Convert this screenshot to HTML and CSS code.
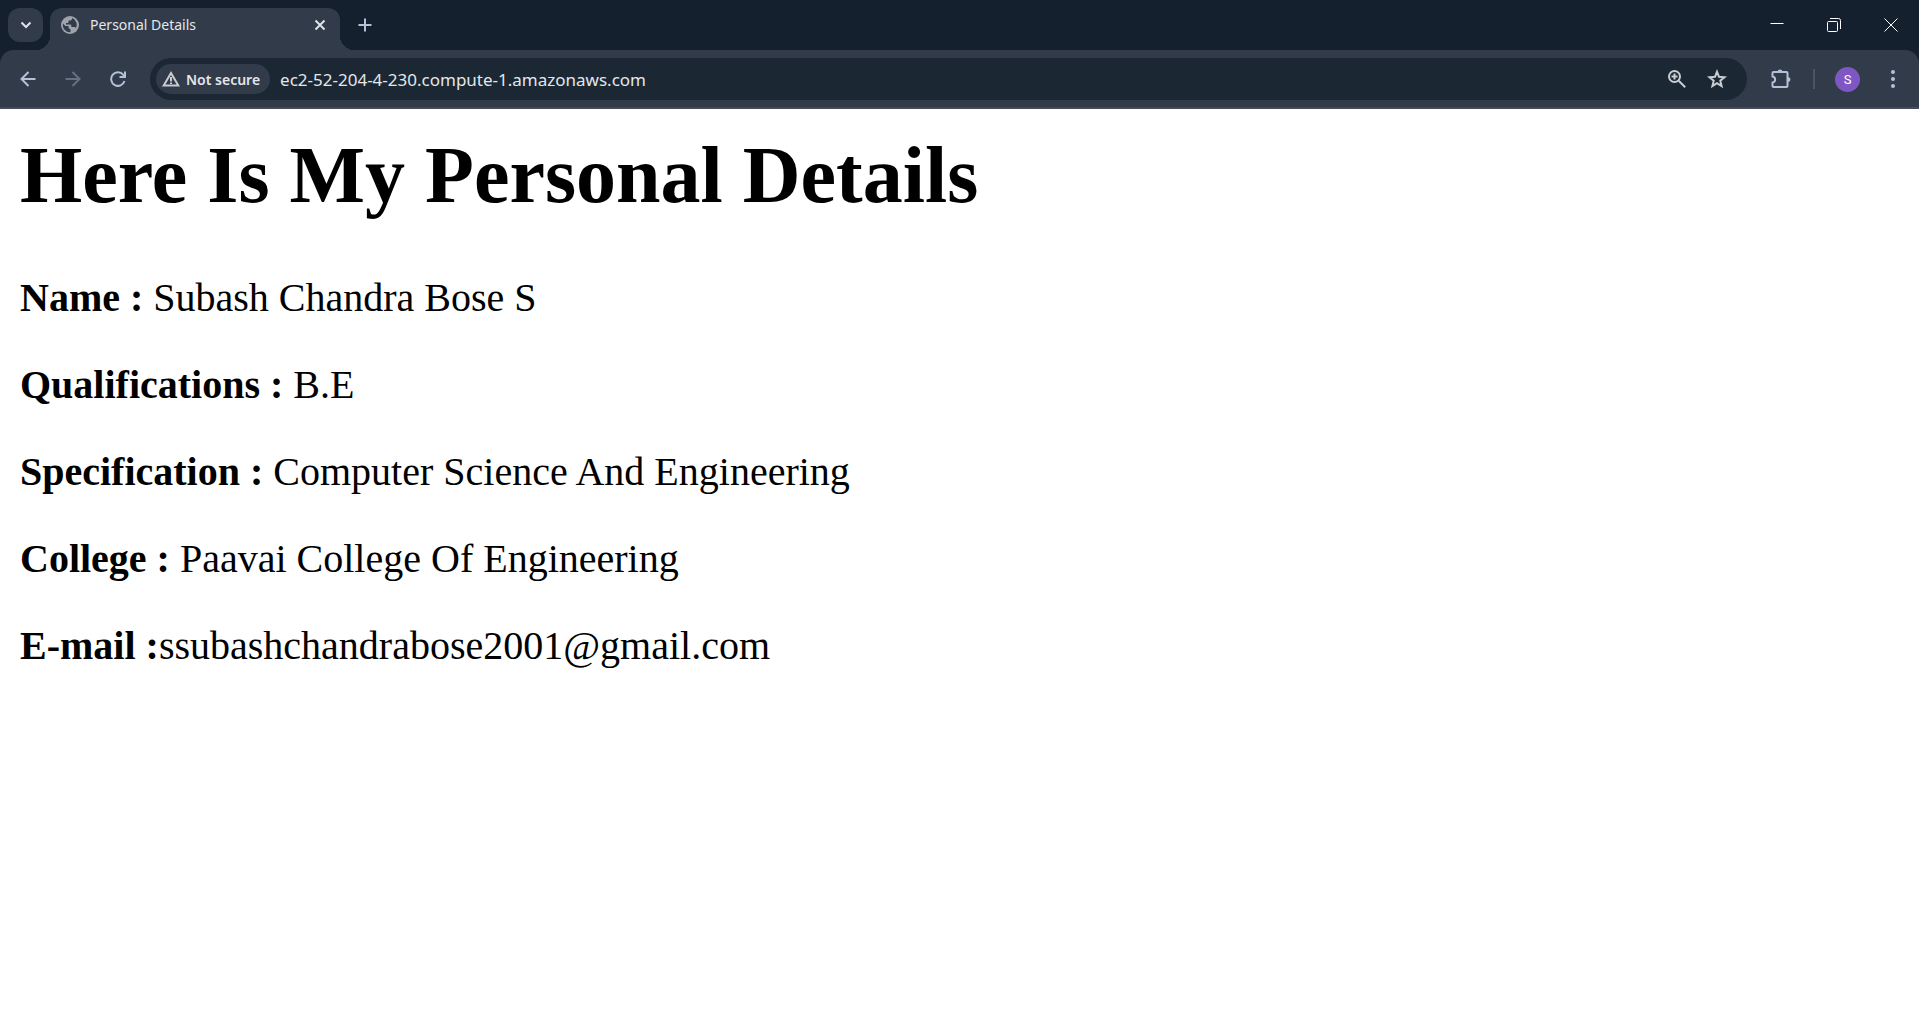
FILE: index.html
```html
<!DOCTYPE html>
<html lang="en">
<head>
<meta charset="utf-8">
<title>Personal Details</title>
<link rel="stylesheet" href="styles.css">
</head>
<body>
<header class="browser">
  <div class="tab-strip">
    <button class="tab-search" aria-label="Search tabs">
      <svg width="12" height="8" viewBox="0 0 12 8"><path d="M1.500 1.500 6 6l4.500-4.500" class="line"/></svg>
    </button>
    <div class="tab">
      <svg class="globe" width="18" height="18" viewBox="0 0 18 18"><circle cx="9" cy="9" r="9" fill="#a0a4aa"/><path d="M2 7.500 4.500 10h3v2l2 1.500v2.700A7.200 7.200 0 0 1 2 7.500ZM11 2.100v.600c0 1-.800 1.800-1.800 1.800H7.500v1.700c0 .500-.400.900-.900.900H5v1.300h4.400c.500 0 .900.400.900.900v1.600h2.900c.800 0 1.500.500 1.700 1.200A7.200 7.200 0 0 0 11 2.100Z" fill="#313b4a"/></svg>
      <span class="tab-title">Personal Details</span>
      <button class="tab-close" aria-label="Close tab">
        <svg width="12" height="12" viewBox="0 0 12 12"><path d="m1.500 1.500 9 9m0-9-9 9" class="line"/></svg>
      </button>
    </div>
    <button class="new-tab" aria-label="New tab">
      <svg width="14" height="14" viewBox="0 0 14 14"><path d="M7 .500v13M.500 7h13" class="line blue"/></svg>
    </button>
    <div class="window-buttons">
      <button aria-label="Minimize"><svg width="14" height="14" viewBox="0 0 14 14"><path d="M.500 5.500h13" class="line thin"/></svg></button>
      <button aria-label="Restore"><svg width="14" height="14" viewBox="0 0 14 14"><rect x=".5" y="3.500" width="10" height="10" rx="1" class="line thin"/><path d="M3 .500h8.500a2 2 0 0 1 2 2V11" class="line thin"/></svg></button>
      <button aria-label="Close"><svg width="14" height="14" viewBox="0 0 14 14"><path d="m.500.500 13 13m0-13-13 13" class="line thin"/></svg></button>
    </div>
  </div>
  <div class="toolbar">
    <button class="nav" aria-label="Back"><svg width="16" height="16" viewBox="0 0 16 16"><path d="M15.500 8H2m6.500-7L1.500 8l7 7" class="line blue"/></svg></button>
    <button class="nav dim" aria-label="Forward"><svg width="16" height="16" viewBox="0 0 16 16"><path d="M.500 8H14M7.500 1l7 7-7 7" class="line blue"/></svg></button>
    <button class="nav" aria-label="Reload"><svg width="16" height="16" viewBox="0 0 16 16"><path d="M14.500 10A6.800 6.800 0 1 1 13.300 3.800L15 5.600M15 .500v5.500H9.500" class="line blue"/></svg></button>
    <div class="omnibox">
      <button class="chip">
        <svg width="18" height="16" viewBox="0 0 18 16"><path d="M9 2 1.700 14.500h14.600Z" class="line soft"/><path d="M9 6v4.500M9 11.500v1.500" class="line soft"/></svg>
        Not secure
      </button>
      <input class="url" type="text" aria-label="Address" value="ec2-52-204-4-230.compute-1.amazonaws.com">
      <button class="tool" aria-label="Zoom"><svg width="18" height="18" viewBox="0 0 18 18"><circle cx="6.500" cy="6.500" r="5.500" class="line soft"/><path d="m10.700 10.700 6.500 6.500M6.500 3.500v6M3.500 6.500h6" class="line soft"/></svg></button>
      <button class="tool" aria-label="Bookmark this page"><svg width="20" height="20" viewBox="0 0 20 20"><path d="m10 2.800 2 5 5.500.400-4.200 3.500 1.300 5.400-4.600-2.900-4.600 2.900 1.300-5.400L2.500 8.200 8 7.800Z" class="line soft"/></svg></button>
    </div>
    <button class="ext" aria-label="Extensions"><svg width="22" height="22" viewBox="0 0 22 22"><path d="M3.500 4h13a1 1 0 0 1 1 1v13a1 1 0 0 1-1 1h-13a1 1 0 0 1-1-1v-3.500c3.500-.500 3.500-5.500 0-6V5a1 1 0 0 1 1-1Z" class="line blue"/><path d="M7.500 4a2.500 2.500 0 0 1 5 0ZM18 9a2.500 2.500 0 0 1 0 5Z" fill="#b4c2d9"/></svg></button>
    <span class="divider"></span>
    <button class="avatar" aria-label="Profile">S</button>
    <button class="menu" aria-label="Menu"><svg width="6" height="18" viewBox="0 0 6 18"><g fill="#b4c2d9"><circle cx="3" cy="2" r="2"/><circle cx="3" cy="9" r="2"/><circle cx="3" cy="16" r="2"/></g></svg></button>
  </div>
</header>
<main class="page">
  <h1>Here Is My Personal Details</h1>
  <p><b>Name :</b> Subash Chandra Bose S</p>
  <p><b>Qualifications :</b> B.E</p>
  <p><b>Specification :</b> Computer Science And Engineering</p>
  <p><b>College :</b> Paavai College Of Engineering</p>
  <p><b>E-mail :</b>ssubashchandrabose2001@gmail.com</p>
</main>
</body>
</html>
```
FILE: styles.css
```css
* { box-sizing: border-box; }

body {
  margin: 0;
  background: #fff;
  color: #000;
  font-family: "Liberation Serif", serif;
}

button {
  display: flex;
  align-items: center;
  justify-content: center;
  flex: none;
  margin: 0;
  padding: 0;
  border: 0;
  background: none;
  color: inherit;
  font: inherit;
}

.line { fill: none; stroke: #dfe3e8; stroke-width: 2; }
.line.soft { stroke: #c9ccd1; }
.line.thin { stroke: #fff; stroke-width: 1; }
.line.blue { stroke: #b4c2d9; }

.browser {
  background: #15202f;
  color: #e3e6ea;
  font-family: "Noto Sans", "Open Sans", sans-serif;
}

.tab-strip {
  display: flex;
  align-items: flex-start;
  height: 50px;
  padding: 8px 0 0 8px;
}

.tab-search {
  width: 35px;
  height: 34px;
  border-radius: 12px;
  background: #313b4a;
}

.tab {
  position: relative;
  display: flex;
  align-items: center;
  width: 290px;
  height: 42px;
  margin-left: 7px;
  padding: 0 12px 8px 11px;
  border-radius: 12px 12px 0 0;
  background: #313b4a;
  font-size: 14px;
}

/* Curved feet where the tab meets the toolbar */
.tab::before,
.tab::after {
  content: "";
  position: absolute;
  bottom: 0;
  width: 14px;
  height: 14px;
}
.tab::before { right: 100%; background: radial-gradient(circle at 0 0, transparent 14px, #313b4a 14px); }
.tab::after { left: 100%; background: radial-gradient(circle at 100% 0, transparent 14px, #313b4a 14px); }

.tab-title { flex: 1; margin-left: 11px; line-height: 20px; }
.tab-close { width: 16px; height: 16px; }
.new-tab { width: 34px; height: 34px; margin-left: 8px; }

.window-buttons { display: flex; margin-left: auto; }
.window-buttons button { width: 57px; height: 34px; }

.toolbar {
  display: flex;
  align-items: center;
  height: 59px;
  padding: 1px 14px 0 5px;
  border-bottom: 2px solid #454b57;
  border-radius: 14px 14px 0 0;
  background: #313b4a;
}

.nav { width: 45px; height: 42px; }
.dim { opacity: .4; }

.omnibox {
  display: flex;
  flex: 1;
  align-items: center;
  height: 42px;
  margin-left: 10px;
  padding: 0 10px 0 6px;
  border-radius: 21px;
  background: #1b2834;
}

.chip {
  gap: 6px;
  height: 30px;
  padding: 0 10px 0 6px;
  border-radius: 15px;
  background: #313b4a;
  font-size: 14px;
  font-weight: 600;
}

.url {
  flex: 1;
  min-width: 0;
  margin: 0;
  padding: 2px 0 0 10px;
  border: 0;
  outline: 0;
  background: none;
  color: #e3e6ea;
  font: 17px/24px "Noto Sans", "Open Sans", sans-serif;
}

.tool { width: 40px; height: 40px; }
.ext { width: 40px; height: 40px; margin-left: 14px; }
.divider { width: 2px; height: 20px; margin: 0 20px 0 12px; background: #4a5566; }

.avatar {
  width: 25px;
  height: 25px;
  border-radius: 50%;
  background: #7e57c2;
  color: #fff;
  font: 13px "Roboto", sans-serif;
}

.menu { width: 24px; height: 40px; margin-left: 21px; }

.page { padding: 20px; font-size: 40px; line-height: 47px; }
.page h1 { margin: 0 0 53px; font-size: 80px; line-height: 92px; }
.page p { margin: 0 0 40px; }
```
